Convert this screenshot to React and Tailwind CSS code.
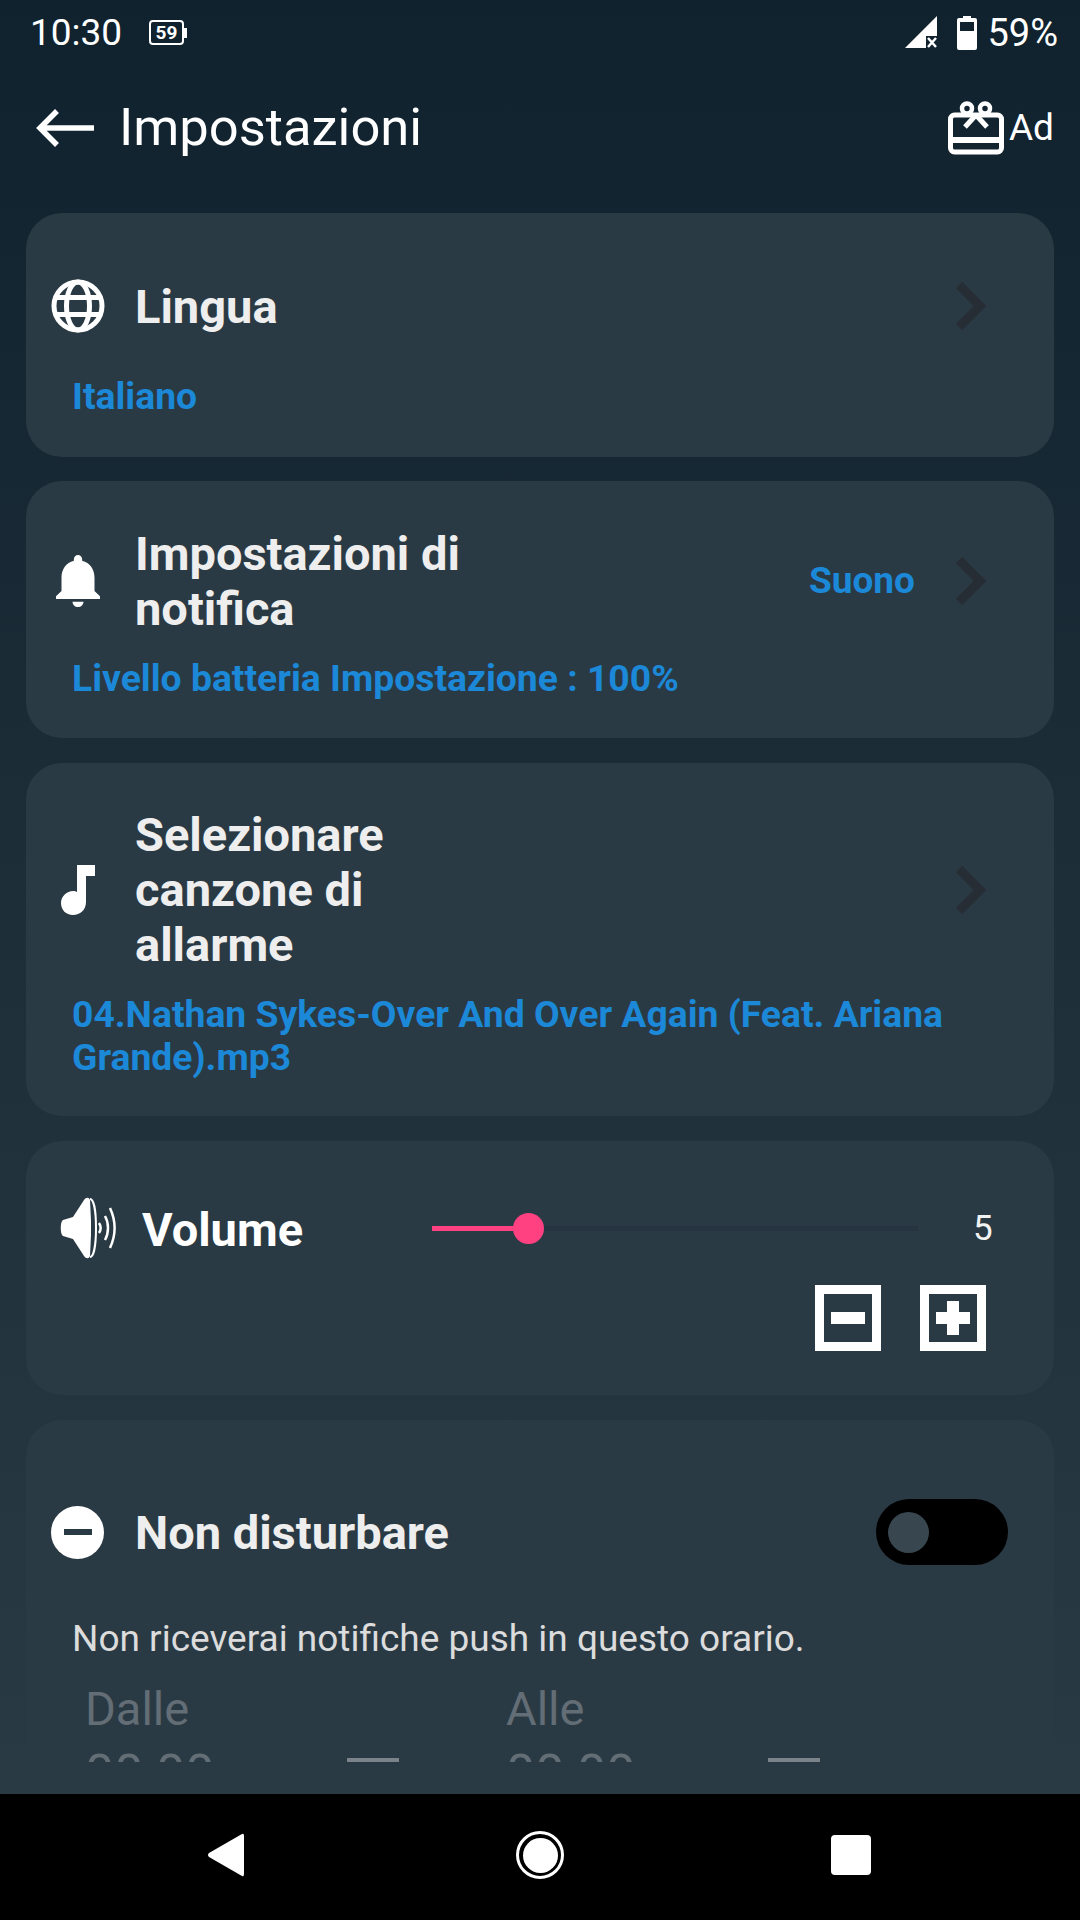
import React from "react";

const Chevron = ({ className = "" }) => (
  <svg width="34" height="50" viewBox="0 0 34 50" className={className} fill="none">
    <path d="M6 4 L27 25 L6 46" stroke="#262d35" strokeWidth="9" />
  </svg>
);

const Globe = () => (
  <svg width="54" height="54" viewBox="0 0 54 54" fill="none" stroke="#fff" strokeWidth="5">
    <circle cx="27" cy="27" r="24" />
    <ellipse cx="27" cy="27" rx="11.500" ry="24" />
    <path d="M5 18.500 H49 M5 35.500 H49" />
  </svg>
);

const Bell = () => (
  <svg width="44" height="52" viewBox="4 2.500 16 19.500" preserveAspectRatio="none" fill="#fff">
    <path d="M12 22c1.100 0 2-.9 2-2h-4c0 1.100.89 2 2 2zm6-6v-5c0-3.070-1.640-5.640-4.500-6.320V4c0-.83-.67-1.500-1.500-1.500s-1.500.67-1.500 1.500v.68C7.630 5.360 6 7.920 6 11v5l-2 2v1h16v-1l-2-2z" />
  </svg>
);

const Note = () => (
  <svg width="34" height="50" viewBox="0 0 34 50" fill="#fff">
    <path d="M16 0 H34 V11 H25 V37 C25 45 19 50 12 50 C5 50 0 45 0 38 C0 31 6 26 12 26 C14 26 15 26.500 16 27 Z" />
  </svg>
);

const Speaker = () => (
  <svg width="58" height="62" viewBox="0 0 58 62" fill="none">
    <path d="M3 23 L13 20 L24 3 C26 0 29 0 30 3 L31 24 L31 38 L30 59 C29 62 26 62 24 59 L13 42 L3 39 C0 38 0 24 3 23 Z" fill="#fff" />
    <path d="M30 2 C34 2 36 16 36 31 C36 46 34 60 30 60" stroke="#fff" strokeWidth="2" />
    <path d="M39 26 C41 29 41 33 39 36" stroke="#fff" strokeWidth="2.500" />
    <path d="M45 19 C49 26 49 36 45 43" stroke="#fff" strokeWidth="2.500" />
    <path d="M50 11 C56 24 56 38 50 51" stroke="#fff" strokeWidth="2.500" />
  </svg>
);

const Gift = () => (
  <svg width="56" height="54" viewBox="0 0 56 54" fill="none" stroke="#fff" strokeWidth="5">
    <rect x="2.500" y="14" width="51" height="37" rx="4" />
    <rect x="2.500" y="36" width="51" height="6" fill="#fff" stroke="none" />
    <circle cx="19" cy="7.500" r="5" strokeWidth="4.500" />
    <circle cx="37" cy="7.500" r="5" strokeWidth="4.500" />
    <path d="M28 14 L17 26 M28 14 L39 26" strokeWidth="5" />
  </svg>
);

const Row = ({ icon, title, right }) => (
  <div className="flex min-h-[62px] items-center">
    <div className="ml-[25px] flex w-[54px] justify-center">{icon}</div>
    <div className="ml-[30px] w-[340px] text-[47px] font-bold leading-[55px] text-[#eeeeee]">{title}</div>
    <div className="ml-auto flex items-center">
      {right}
      <Chevron className="ml-[30px] mr-[67px]" />
    </div>
  </div>
);

const Sub = ({ children, className = "" }) => (
  <div className={`px-[46px] text-[37.300px] font-bold leading-[43px] text-[#1c88d8] ${className}`}>{children}</div>
);

const TimeField = ({ label, className = "" }) => (
  <div className={className}>
    <div className="text-[47px] leading-[50px] text-[#636d75]">{label}</div>
    <div className="relative mt-[15px] text-[52px] leading-[50px] text-[#636d75]">
      00:00
      <div className="absolute left-[262px] top-[9px] h-[4px] w-[52px] bg-[#7a838a]" />
    </div>
  </div>
);

export default function App() {
  return (
    <div className="flex h-[1920px] w-[1080px] flex-col overflow-hidden bg-black font-['Roboto',sans-serif]">
      <div className="flex h-[1794px] flex-col bg-gradient-to-b from-[#10222e] to-[#2a3a44]">
        {/* status bar */}
        <div className="flex h-[64px] shrink-0 items-center pl-[30px] pr-[22px] pt-[1px] text-white">
          <span className="text-[37px] leading-none">10:30</span>
          <svg width="46" height="26" viewBox="0 0 46 26" className="ml-[27px]" fill="none">
            <rect x="1" y="1" width="33" height="23" rx="3" stroke="#fff" strokeWidth="2" />
            <rect x="35" y="8" width="3" height="10" fill="#fff" />
            <text x="17.500" y="19" textAnchor="middle" fontSize="19" fontWeight="700" fill="#fff" fontFamily="Roboto">59</text>
          </svg>
          <svg width="33" height="33" viewBox="0 0 33 33" className="ml-auto" fill="#fff">
            <path d="M32 0 V20 H21 V32 H0 Z" />
            <path d="M23 22 L31 31 M31 22 L23 31" stroke="#fff" strokeWidth="2.500" />
          </svg>
          <svg width="20" height="34" viewBox="0 0 20 34" className="ml-[19px]" fill="#fff">
            <path d="M6 0 H14 V2 H18 Q20 2 20 4 V32 Q20 34 18 34 H2 Q0 34 0 32 V4 Q0 2 2 2 H6 Z M3 6 V15 H17 V6 Z" fillRule="evenodd" />
          </svg>
          <span className="ml-[10px] text-[38px] leading-none">59%</span>
        </div>
        {/* header */}
        <div className="flex h-[149px] shrink-0 items-center pb-[22px] pl-[36px] pr-[26px] text-white">
          <svg width="58" height="40" viewBox="0 0 58 40" fill="none" stroke="#fff" strokeWidth="5.500">
            <path d="M58 20 H4 M21 3 L4 20 L21 37" />
          </svg>
          <span className="ml-[25px] text-[52.500px] leading-none">Impostazioni</span>
          <div className="ml-auto flex items-center">
            <Gift />
            <span className="ml-[5px] text-[37px] leading-none">Ad</span>
          </div>
        </div>
        {/* scroller */}
        <div className="h-[1549px] shrink-0 overflow-hidden px-[26px]">
          <div className="rounded-[36px] bg-[#2a3a44] pb-[39px] pt-[62px]">
            <Row icon={<Globe />} title="Lingua" />
            <Sub className="mt-[38px]">Italiano</Sub>
          </div>
          <div className="mt-[24px] rounded-[36px] bg-[#2a3a44] pb-[38px] pt-[45px]">
            <Row
              icon={<Bell />}
              title="Impostazioni di notifica"
              right={<span className="mr-[8px] text-[37px] font-bold text-[#1c88d8]">Suono</span>}
            />
            <Sub className="mt-[21px]">Livello batteria Impostazione : 100%</Sub>
          </div>
          <div className="mt-[25px] rounded-[36px] bg-[#2a3a44] pb-[37px] pt-[44px]">
            <Row icon={<Note />} title="Selezionare canzone di allarme" />
            <Sub className="mt-[21px]">04.Nathan Sykes-Over And Over Again (Feat. Ariana Grande).mp3</Sub>
          </div>
          <div className="mt-[25px] h-[254px] rounded-[36px] bg-[#2a3a44] pt-[56px]">
            <div className="flex h-[62px] items-center">
              <div className="ml-[34px]"><Speaker /></div>
              <span className="ml-[24px] w-[290px] pt-[4px] text-[47px] font-bold text-white">Volume</span>
              <div className="relative h-[5px] w-[486px] bg-[#253440]">
                <div className="h-[5px] w-[97px] bg-[#ff4081]" />
                <div className="absolute left-[81px] top-[-13px] h-[31px] w-[31px] rounded-full bg-[#ff4081]" />
              </div>
              <span className="ml-[55px] text-[35px] leading-none text-[#f2f2f2]">5</span>
            </div>
            <div className="mr-[68px] mt-[26px] flex justify-end gap-[39px]">
              <div className="flex h-[66px] w-[66px] items-center justify-center border-[9px] border-white">
                <div className="h-[12px] w-[34px] bg-white" />
              </div>
              <div className="relative flex h-[66px] w-[66px] items-center justify-center border-[9px] border-white">
                <div className="h-[12px] w-[34px] bg-white" />
                <div className="absolute h-[34px] w-[12px] bg-white" />
              </div>
            </div>
          </div>
          <div className="mt-[25px] h-[500px] rounded-[36px] bg-[#2a3a44] pt-[79px]">
            <div className="flex h-[66px] items-center">
              <div className="ml-[25px] flex h-[53px] w-[53px] items-center justify-center rounded-full bg-white">
                <div className="h-[6px] w-[28px] bg-[#2a3a44]" />
              </div>
              <span className="ml-[31px] pt-[2px] text-[47px] font-bold text-[#eeeeee]">Non disturbare</span>
              <div className="ml-auto mr-[46px] flex h-[66px] w-[132px] items-center rounded-full bg-black pl-[12px]">
                <div className="h-[41px] w-[41px] rounded-full bg-[#37464f]" />
              </div>
            </div>
            <div className="ml-[46px] mt-[52px] text-[37px] leading-[43px] text-[#dcdcdc]">Non riceverai notifiche push in questo orario.</div>
            <div className="mt-[24px] flex">
              <TimeField label="Dalle" className="ml-[59px] w-[421px]" />
              <TimeField label="Alle" />
            </div>
          </div>
        </div>
      </div>
      {/* nav */}
      <div className="flex h-[126px] items-center pb-[4px] pl-[207px]">
        <svg width="38" height="44" viewBox="0 0 38 44" fill="#fff">
          <path d="M35 1 Q37 0 37 3 V41 Q37 44 35 43 L2 24 Q0 22 2 20 Z" />
        </svg>
        <div className="ml-[271px] flex h-[48px] w-[48px] items-center justify-center rounded-full border-[3px] border-white">
          <div className="h-[35px] w-[35px] rounded-full bg-white" />
        </div>
        <div className="ml-[267px] h-[40px] w-[40px] rounded-[4px] bg-white" />
      </div>
    </div>
  );
}
